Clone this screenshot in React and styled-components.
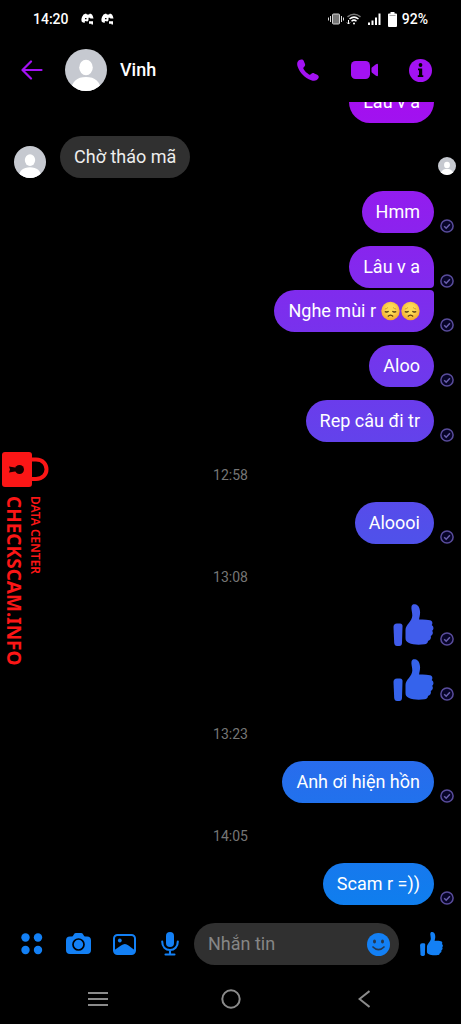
import React from "react";
import styled, { createGlobalStyle, css } from "styled-components";

const GlobalStyle = createGlobalStyle`
  *, *::before, *::after { box-sizing: border-box; }
  body {
    margin: 0;
    background: #000;
    color: #fff;
    font-family: Roboto, "Noto Sans", sans-serif;
  }
`;

const PURPLE = "#a312f3";
const BLUE = "#1380f5";

const Phone = styled.div`
  position: relative;
  display: flex;
  flex-direction: column;
  height: 100vh;
  overflow: hidden;
  background: #000;
`;

const StatusBar = styled.div`
  display: flex;
  align-items: center;
  flex: none;
  height: 38px;
  padding: 0 33px;
  font-size: 14px;
  font-weight: 500;
  line-height: 20px;
`;

const StatusGroup = styled.div`
  display: flex;
  align-items: center;
  gap: 7px;
  margin-left: ${(p) => (p.$end ? "auto" : "12px")};
  svg { display: block; }
`;

const BatteryLevel = styled.div`
  display: flex;
  align-items: center;
  gap: 5px;
`;

const Header = styled.header`
  display: flex;
  align-items: center;
  flex: none;
  height: 64px;
  padding: 0 27px 0 18px;
`;

const IconButton = styled.button`
  display: flex;
  align-items: center;
  justify-content: center;
  flex: none;
  width: 28px;
  height: 28px;
  padding: 0;
  border: 0;
  background: none;
  color: ${(p) => p.$color};
  cursor: pointer;
  svg { display: block; flex: none; }
`;

const Contact = styled.div`
  display: flex;
  align-items: center;
  gap: 13px;
  margin-left: 19px;
`;

const Name = styled.h1`
  margin: 0;
  font-size: 18px;
  font-weight: 500;
  line-height: 24px;
`;

const CallActions = styled.div`
  display: flex;
  gap: 28px;
  margin-left: auto;
`;

const Chat = styled.main`
  display: flex;
  flex: 1;
  min-height: 0;
  flex-direction: column;
  justify-content: flex-end;
  overflow: hidden;
  padding-bottom: 9px;
`;

const Messages = styled.ul`
  display: flex;
  flex-direction: column;
  gap: 13px;
  margin: 0;
  padding: 0;
  list-style: none;
`;

const MessageGroup = styled.li`
  display: flex;
  flex-direction: column;
  gap: 2px;
`;

const TimeRow = styled.li`
  padding-top: 6px;
  text-align: center;
  color: #767676;
  font-size: 14px;
  line-height: 28px;
`;

const Row = styled.div`
  display: flex;
  align-items: flex-end;
  justify-content: ${(p) => (p.$received ? "flex-start" : "flex-end")};
  gap: 4px;
  padding: 0 5px 0 14px;
`;

const Receipt = styled.span`
  display: flex;
  justify-content: center;
  flex: none;
  width: 18px;
  margin-left: ${(p) => (p.$push ? "auto" : "0")};
  padding-bottom: ${(p) => (p.$push ? "3px" : "0")};
`;

const SenderAvatar = styled.span`
  display: flex;
  margin-right: 10px;
`;

const Bubble = styled.p`
  display: flex;
  align-items: center;
  min-height: 42px;
  margin: 0;
  padding: 9px 14px;
  border-radius: 21px;
  font-size: 18px;
  line-height: 24px;
  ${(p) =>
    p.$received
      ? css`
          background: #303030;
          color: #ededed;
        `
      : css`
          background: linear-gradient(#a80cf0 8%, #5150ea 52%, #0c80ee 90%) fixed;
        `}
  ${(p) => p.$place === "first" && css`border-bottom-right-radius: 4px;`}
  ${(p) => p.$place === "last" && css`border-top-right-radius: 4px;`}
`;

const Emojis = styled.span`
  display: flex;
  gap: 1px;
  margin-left: 5px;
`;

const Composer = styled.form`
  display: flex;
  align-items: center;
  flex: none;
  height: 60px;
  padding: 0 16px 0 18px;
`;

const Tools = styled.div`
  display: flex;
  gap: 18px;
`;

const Field = styled.div`
  display: flex;
  align-items: center;
  flex: 1;
  min-width: 0;
  height: 42px;
  margin: 0 18px 0 10px;
  padding: 0 7px 0 14px;
  border-radius: 21px;
  background: #303030;
`;

const TextInput = styled.input`
  flex: 1;
  min-width: 0;
  padding: 0;
  border: 0;
  outline: 0;
  background: none;
  color: #fff;
  font: 18px/24px Roboto, "Noto Sans", sans-serif;
  &::placeholder { color: #868686; opacity: 1; }
`;

const SystemNav = styled.nav`
  display: grid;
  grid-template-columns: repeat(3, 1fr);
  justify-items: center;
  align-items: center;
  flex: none;
  height: 50px;
  padding: 0 31px;
`;

const Watermark = styled.aside`
  position: absolute;
  top: 44%;
  left: 2px;
  color: #fb1616;
  font-family: "Noto Sans", sans-serif;
  pointer-events: none;
  svg { display: block; }
`;

const WatermarkText = styled.div`
  display: flex;
  align-items: flex-start;
  gap: 4px;
  margin-top: 9px;
  padding-left: 2px;
`;

const VerticalText = styled.span`
  writing-mode: vertical-rl;
  white-space: nowrap;
  font-size: ${(p) => (p.$small ? "12px" : "19px")};
  font-weight: ${(p) => (p.$small ? 600 : 700)};
  line-height: ${(p) => (p.$small ? "14px" : "20px")};
`;

function Avatar({ size, id }) {
  return (
    <svg width={size} height={size} viewBox="0 0 42 42" role="img" aria-label="Vinh">
      <clipPath id={id}><circle cx="21" cy="21" r="21" /></clipPath>
      <g clipPath={`url(#${id})`}>
        <rect width="42" height="42" fill="#c6c9d0" />
        <ellipse cx="21" cy="18.5" rx="6.8" ry="7.7" fill="#fff" />
        <path d="M6 42C6.500 32.500 12 28 21 28S35.500 32.500 36 42Z" fill="#fff" />
      </g>
    </svg>
  );
}

function Tick() {
  return (
    <svg width="14" height="14" viewBox="0 0 14 14" fill="none" role="img" aria-label="Sent">
      <circle cx="7" cy="7" r="6.100" fill="#070428" stroke="#594c9c" strokeWidth="1.500" />
      <path d="M4.200 7.200l2 2 3.700-4" stroke="#6a60ad" strokeWidth="1.500" />
    </svg>
  );
}

function Thumb({ width, height, color }) {
  return (
    <svg width={width} height={height} viewBox="0 0 40 42" fill={color} role="img" aria-label="Like">
      <path d="M3.500 19.500H6.500Q9 19.500 9 22L8.500 39Q8.400 42 5.800 42H3.500Q1 42 .7 39L0 23Q0 19.500 3.500 19.500Z" />
      <path d="M12 26C12 20.500 18.800 17.500 18.800 11.500C18.800 8 17.500 5 18 2.500C18.400.3 20 0 21.500 0.200C25 .7 26.600 4.500 26.600 8.500C26.600 11.500 25.600 13.500 25.600 15.600C29 15.200 33 15.500 36.500 16.200C39 16.700 39.500 19.500 38.200 21C40.500 22.500 40.500 25.500 38.700 26.800C40 28.800 39.300 31.200 37.300 32C38 34.500 36.500 36.500 34.500 37C34.500 39 33 40.100 31 40.300C25.500 41 19 40.800 15.500 39C13 37.700 12 36.500 12 34Z" />
    </svg>
  );
}

function SadFace({ id }) {
  return (
    <svg width="19" height="20" viewBox="0 0 20 20" fill="none" role="img" aria-label="😞">
      <radialGradient id={id} cx=".5" cy=".4" r=".6">
        <stop offset=".4" stopColor="#fddb55" />
        <stop offset="1" stopColor="#f4a52c" />
      </radialGradient>
      <circle cx="10" cy="10" r="9.700" fill={`url(#${id})`} />
      <path d="M4 8Q6 7.700 7.300 6.300M16 8Q14 7.700 12.700 6.300" stroke="#c38621" strokeWidth=".8" />
      <path d="M4 10.500Q6 11.800 8 10.300M16 10.500Q14 11.800 12 10.300" stroke="#503714" strokeWidth="1.500" />
      <path d="M7.200 15.800Q10 12.800 12.800 15.800" stroke="#634014" strokeWidth="1.400" />
    </svg>
  );
}

function AppBadge() {
  return (
    <svg width="13" height="12" viewBox="0 0 13 12" fill="#fff" aria-hidden="true">
      <path d="M2.500 1.500L5 .6 6 1.400H8L9 .6 11 1.500Q12 3 12.500 5.500H9.500L8.700 4.800H7.500V7.200L6.500 8.500 4 8 3.500 10 1 9Q-.2 7 1 4Z" />
      <path d="M8 8.200H12V11.500H10.500V10.800H8Z" />
      <path d="M4 5H5.500V6.200H4Z" fill="#000" />
    </svg>
  );
}

const StatusIcons = () => (
  <StatusGroup $end>
    <svg width="53" height="16" viewBox="0 0 53 16" fill="none" aria-hidden="true">
      <rect x="4.500" y="3" width="7" height="10" rx="1" fill="#777" stroke="#d2d2d2" />
      <path d="M2.500 5V11M.5 6.500V9.500M13.500 5V11M15.500 6.500V9.500" stroke="#d8d8d8" />
      <path d="M19.500 5.800Q26 .5 32.500 5.800" stroke="#777" strokeWidth="1.500" />
      <path d="M21.500 8Q26 4.300 30.500 8M23.500 10.200Q26 8 28.500 10.200" stroke="#fff" strokeWidth="1.500" />
      <circle cx="26" cy="12.500" r="1" fill="#fff" />
      <path d="M20.500 9V13M19 11.500L20.500 13 22 11.500" stroke="#fff" />
      <path d="M41 11.500V14M44.500 9.500V14M48 6.500V14M51.500 2.500V14" stroke="#fff" strokeWidth="2" />
    </svg>
    <BatteryLevel>
      <svg width="9" height="15" viewBox="0 0 9 15" aria-hidden="true">
        <path d="M2.500 0H6.500V1.500H8Q9 1.500 9 2.500V14Q9 15 8 15H1Q0 15 0 14V2.500Q0 1.500 1 1.500H2.500Z" fill="#fff" />
        <path d="M1.500 3.500H7.500" stroke="#aaa" />
      </svg>
      <span>92%</span>
    </BatteryLevel>
  </StatusGroup>
);

function Sent({ children, place, pending }) {
  return (
    <Row>
      <Bubble $place={place}>{children}</Bubble>
      <Receipt>{!pending && <Tick />}</Receipt>
    </Row>
  );
}

function SentLike({ color }) {
  return (
    <Row>
      <Thumb width={41} height={42} color={color} />
      <Receipt><Tick /></Receipt>
    </Row>
  );
}

export default function App() {
  return (
    <Phone>
      <GlobalStyle />
      <StatusBar>
        <time>14:20</time>
        <StatusGroup>
          <AppBadge />
          <AppBadge />
        </StatusGroup>
        <StatusIcons />
      </StatusBar>

      <Header>
        <IconButton type="button" aria-label="Back" $color={PURPLE}>
          <svg width="22" height="20" viewBox="0 0 22 20" fill="none" stroke="currentColor" strokeWidth="2.200" strokeLinecap="round" strokeLinejoin="round">
            <path d="M20.500 10H2M10 1.500L1.500 10 10 18.500" />
          </svg>
        </IconButton>
        <Contact>
          <Avatar size={42} id="avatar-header" />
          <Name>Vinh</Name>
        </Contact>
        <CallActions>
          <IconButton type="button" aria-label="Voice call" $color={PURPLE}>
            <svg width="22" height="22" viewBox="0 0 22 22" fill="currentColor">
              <path d="M2.300 1C4 0 6 .2 6.800 1.900L8 4.900C8.500 6.300 7.800 7.200 6.700 8.300C6.200 8.900 6.200 9.500 6.700 10.300C8 12.500 9.800 14.200 12 15.400C12.700 15.800 13.300 15.700 13.900 15.200C15 14.100 16 13.800 17.300 14.400L20.200 15.700C21.800 16.500 22.200 18 21.200 19.600C19.500 22 17 22.300 14.200 21.200C7.500 18.500 2.800 13.600.6 7.400C-.3 4.700.2 2.300 2.300 1Z" />
            </svg>
          </IconButton>
          <IconButton type="button" aria-label="Video call" $color={PURPLE}>
            <svg width="27" height="18" viewBox="0 0 27 18" fill="currentColor">
              <rect width="19" height="18" rx="4.500" />
              <path d="M20.500 7.500Q20.500 6.800 21.100 6.300L25 3.200Q27 2 27 4V14Q27 16 25 14.800L21.100 11.700Q20.500 11.200 20.500 10.500Z" />
            </svg>
          </IconButton>
          <IconButton type="button" aria-label="Conversation info" $color={PURPLE}>
            <svg width="23" height="23" viewBox="0 0 23 23">
              <circle cx="11.500" cy="11.500" r="11.500" fill="currentColor" />
              <circle cx="11.500" cy="6" r="1.900" fill="#000" />
              <path d="M9 9.500H13.200V16.200H14.300V18H8.800V16.200H10V11.300H9Z" fill="#000" />
            </svg>
          </IconButton>
        </CallActions>
      </Header>

      <Chat>
        <Messages>
          <MessageGroup><Sent pending>Lâu v a</Sent></MessageGroup>
          <MessageGroup>
            <Row $received>
              <SenderAvatar><Avatar size={32} id="avatar-sender" /></SenderAvatar>
              <Bubble $received>Chờ tháo mã</Bubble>
              <Receipt $push><Avatar size={18} id="avatar-seen" /></Receipt>
            </Row>
          </MessageGroup>
          <MessageGroup><Sent>Hmm</Sent></MessageGroup>
          <MessageGroup>
            <Sent place="first">Lâu v a</Sent>
            <Sent place="last">
              Nghe mùi r
              <Emojis><SadFace id="sad-one" /><SadFace id="sad-two" /></Emojis>
            </Sent>
          </MessageGroup>
          <MessageGroup><Sent>Aloo</Sent></MessageGroup>
          <MessageGroup><Sent>Rep câu đi tr</Sent></MessageGroup>
          <TimeRow><time>12:58</time></TimeRow>
          <MessageGroup><Sent>Aloooi</Sent></MessageGroup>
          <TimeRow><time>13:08</time></TimeRow>
          <MessageGroup><SentLike color="#405ceb" /></MessageGroup>
          <MessageGroup><SentLike color="#3563ec" /></MessageGroup>
          <TimeRow><time>13:23</time></TimeRow>
          <MessageGroup><Sent>Anh ơi hiện hồn</Sent></MessageGroup>
          <TimeRow><time>14:05</time></TimeRow>
          <MessageGroup><Sent>Scam r =))</Sent></MessageGroup>
        </Messages>
      </Chat>

      <Composer onSubmit={(e) => e.preventDefault()}>
        <Tools>
          <IconButton type="button" aria-label="More" $color={BLUE}>
            <svg width="22" height="22" viewBox="0 0 22 22" fill="currentColor">
              <circle cx="4.500" cy="4.500" r="4.200" /><circle cx="17" cy="4.500" r="4.200" />
              <circle cx="4.500" cy="17" r="4.200" /><circle cx="17" cy="17" r="4.200" />
            </svg>
          </IconButton>
          <IconButton type="button" aria-label="Camera" $color={BLUE}>
            <svg width="25" height="22" viewBox="0 0 25 22">
              <path d="M4 3.500H5.500Q7 3.500 7.500 2L8 1.200Q8.500 0 10 0H15Q16.500 0 17 1.200L17.500 2Q18 3.500 19.500 3.500H21Q25 3.500 25 7.500V17Q25 21 21 21H4Q0 21 0 17V7.500Q0 3.500 4 3.500Z" fill="currentColor" />
              <circle cx="12.500" cy="11.500" r="5.500" fill="none" stroke="#000" strokeWidth="1.700" />
            </svg>
          </IconButton>
          <IconButton type="button" aria-label="Gallery" $color={BLUE}>
            <svg width="23" height="21" viewBox="0 0 23 21">
              <rect x="1" y="1" width="21" height="19" rx="3.500" fill="none" stroke="currentColor" strokeWidth="2" />
              <circle cx="6.800" cy="6.500" r="1.900" fill="currentColor" />
              <path d="M1.500 16L8 11.500Q12 8.500 15.500 11.500L21.500 16V17Q21.500 20 18 20H5Q1.500 20 1.500 17Z" fill="currentColor" />
            </svg>
          </IconButton>
          <IconButton type="button" aria-label="Voice message" $color={BLUE}>
            <svg width="18" height="24" viewBox="0 0 18 24">
              <rect x="5" y="0" width="8" height="15" rx="4" fill="currentColor" />
              <path d="M1.200 9.500C1.200 15 4.500 18 9 18S16.800 15 16.800 9.500M9 18V22M4.500 22.500H13.500" fill="none" stroke="currentColor" strokeWidth="2.100" strokeLinecap="round" />
            </svg>
          </IconButton>
        </Tools>
        <Field>
          <TextInput type="text" aria-label="Nhắn tin" placeholder="Nhắn tin" />
          <IconButton type="button" aria-label="Emoji" $color={BLUE}>
            <svg width="23" height="23" viewBox="0 0 23 23">
              <circle cx="11.500" cy="11.500" r="11.500" fill="currentColor" />
              <ellipse cx="7.500" cy="8.500" rx="1.500" ry="1.900" fill="#263850" />
              <ellipse cx="15.500" cy="8.500" rx="1.500" ry="1.900" fill="#263850" />
              <path d="M6 14Q11.500 19.500 17 14" fill="none" stroke="#263850" strokeWidth="1.700" strokeLinecap="round" />
            </svg>
          </IconButton>
        </Field>
        <IconButton type="submit" aria-label="Send like" $color={BLUE}>
          <Thumb width={23} height={24} color="currentColor" />
        </IconButton>
      </Composer>

      <SystemNav>
        <IconButton type="button" aria-label="Recent apps" $color="#8b8b8b">
          <svg width="20" height="16" viewBox="0 0 20 16" stroke="currentColor" strokeWidth="2">
            <path d="M0 2H20M0 8H20M0 14H20" />
          </svg>
        </IconButton>
        <IconButton type="button" aria-label="Home" $color="#8b8b8b">
          <svg width="20" height="20" viewBox="0 0 20 20" fill="none" stroke="currentColor" strokeWidth="2">
            <circle cx="10" cy="10" r="8.700" />
          </svg>
        </IconButton>
        <IconButton type="button" aria-label="System back" $color="#8b8b8b">
          <svg width="12" height="18" viewBox="0 0 12 18" fill="none" stroke="currentColor" strokeWidth="2">
            <path d="M11.500 1L1.500 9 11.500 17" />
          </svg>
        </IconButton>
      </SystemNav>

      <Watermark>
        <svg width="47" height="36" viewBox="0 0 47 36" aria-hidden="true">
          <path d="M28 8.500H34C48 8.500 48 28 34 28H28" fill="none" stroke="currentColor" strokeWidth="4" />
          <rect x="0" y="1" width="30" height="35" rx="3" fill="currentColor" />
          <circle cx="17.500" cy="18.500" r="4.500" fill="#140000" />
          <path d="M7 15.500L16 17V20L7 21.500L8 18.500Z" fill="#140000" />
        </svg>
        <WatermarkText>
          <VerticalText>CHECKSCAM.INFO</VerticalText>
          <VerticalText $small>DATA CENTER</VerticalText>
        </WatermarkText>
      </Watermark>
    </Phone>
  );
}
